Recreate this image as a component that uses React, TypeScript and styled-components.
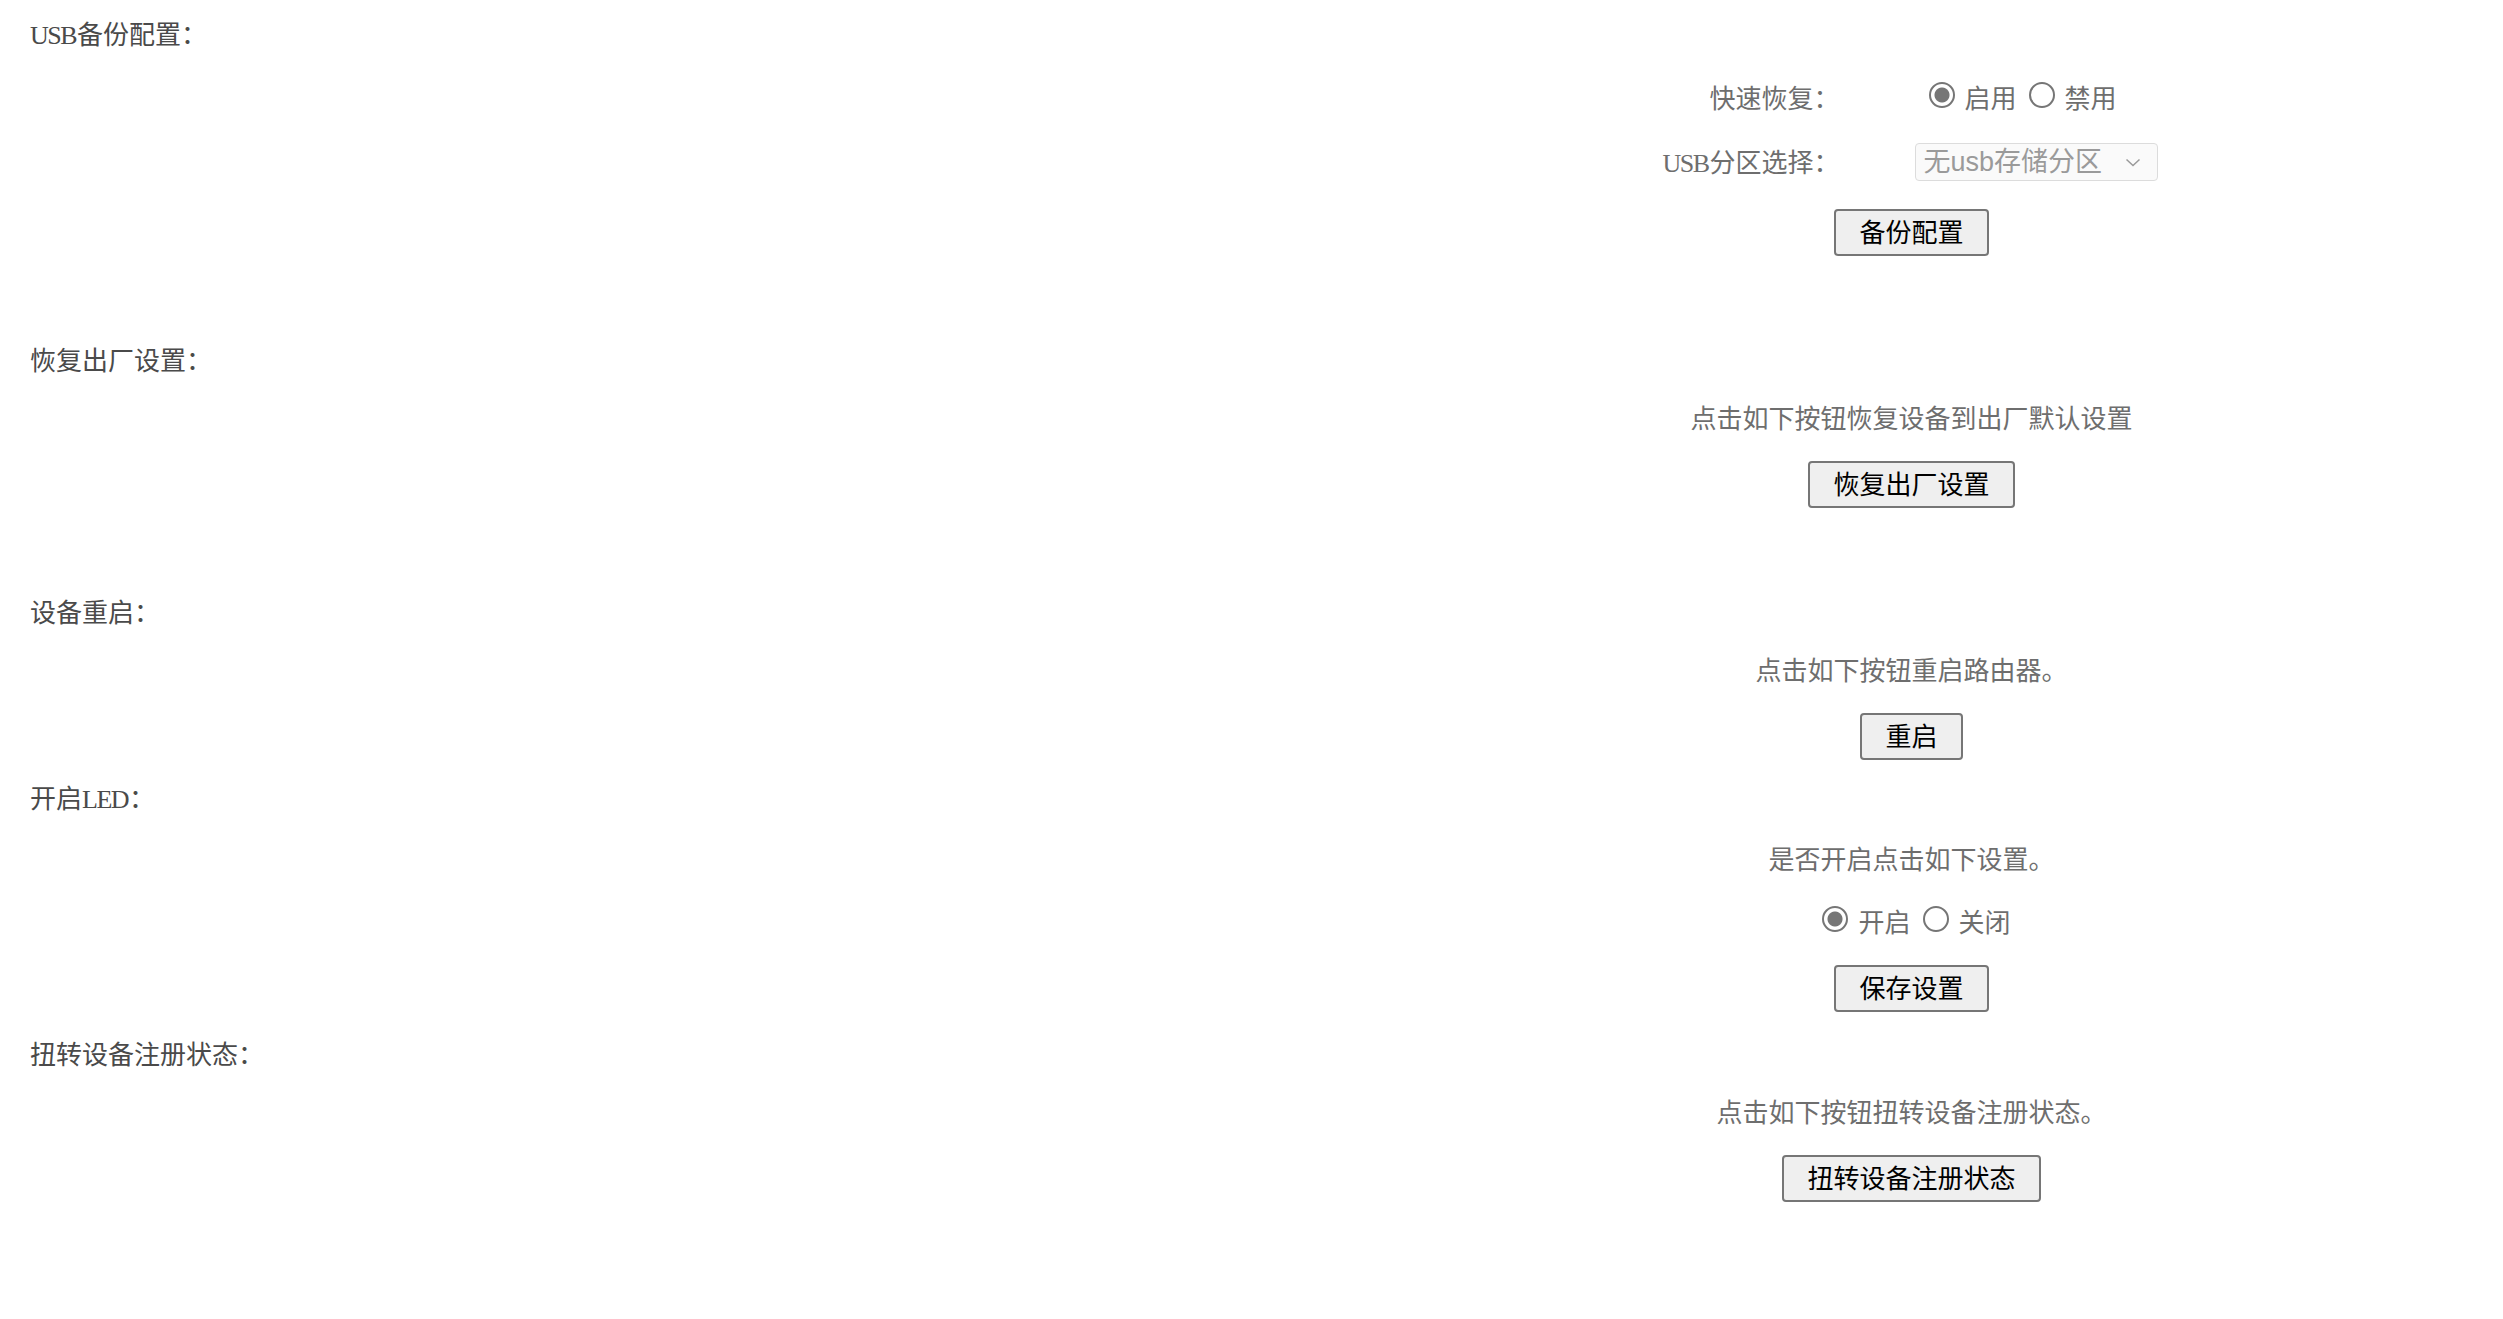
import styled, { createGlobalStyle } from "styled-components"

const GlobalStyle = createGlobalStyle`
    html, body {
        margin: 0;
        padding: 0;
        background: #fff;
    }
    body {
        font-family: "Liberation Serif", "Noto Sans CJK SC", serif;
    }
`

export default function App() {
    return (
        <Page>
            <GlobalStyle />

            <Section $after={86}>
                <Heading><Latin>USB</Latin>备份配置：</Heading>
                <Body>
                    <FormGrid>
                        <Label>快速恢复：</Label>
                        <Value>
                            <RadioGroup $indent={14}>
                                <Radio type="radio" name="fast" defaultChecked />
                                <RadioText>启用</RadioText>
                                <Radio type="radio" name="fast" />
                                <RadioText>禁用</RadioText>
                            </RadioGroup>
                        </Value>
                        <Label><Latin>USB</Latin>分区选择：</Label>
                        <Value>
                            <SelectBox role="combobox" aria-disabled="true">
                                <SelectText>无usb存储分区</SelectText>
                                <svg width="16" height="9" viewBox="0 0 16 9">
                                    <polyline points="1.5,1.5 8,7.5 14.5,1.5" fill="none" stroke="#9a9a9a" strokeWidth="1.5" />
                                </svg>
                            </SelectBox>
                        </Value>
                    </FormGrid>
                    <Button $gap={25}>备份配置</Button>
                </Body>
            </Section>

            <Section $after={86}>
                <Heading>恢复出厂设置：</Heading>
                <Body>
                    <Desc $gap={22}>点击如下按钮恢复设备到出厂默认设置</Desc>
                    <Button $gap={25}>恢复出厂设置</Button>
                </Body>
            </Section>

            <Section $after={20}>
                <Heading>设备重启：</Heading>
                <Body>
                    <Desc $gap={22}>点击如下按钮重启路由器。</Desc>
                    <Button $gap={25}>重启</Button>
                </Body>
            </Section>

            <Section $after={24}>
                <Heading>开启<Latin>LED</Latin>：</Heading>
                <Body>
                    <Desc $gap={25}>是否开启点击如下设置。</Desc>
                    <RadioGroup $indent={10} $gap={27}>
                        <Radio type="radio" name="led" defaultChecked />
                        <RadioText>开启</RadioText>
                        <Radio type="radio" name="led" />
                        <RadioText>关闭</RadioText>
                    </RadioGroup>
                    <Button $gap={25}>保存设置</Button>
                </Body>
            </Section>

            <Section $after={40}>
                <Heading>扭转设备注册状态：</Heading>
                <Body>
                    <Desc $gap={22}>点击如下按钮扭转设备注册状态。</Desc>
                    <Button $gap={25}>扭转设备注册状态</Button>
                </Body>
            </Section>
        </Page>
    )
}

const Page = styled.div`
    width: 2503px;
    min-height: 1319px;
    padding-top: 16px;
    box-sizing: border-box;
`

const Section = styled.section<{ $after: number }>`
    margin-bottom: ${p => p.$after}px;
`

// text lines keep a 36px box, the ink sits a little low as in the original
const Heading = styled.h3`
    margin: 0;
    padding: 4px 0 0 30px;
    height: 36px;
    box-sizing: border-box;
    line-height: 32px;
    font-size: 26px;
    font-weight: normal;
    color: #4a4a4a;
`

const Latin = styled.span`
    font-family: "Liberation Serif", serif;
    letter-spacing: -1.5px;
    margin-right: 1px;
`

const Body = styled.div`
    width: 1183px;
    margin-left: auto;
    display: flex;
    flex-direction: column;
    align-items: center;
`

const FormGrid = styled.div`
    width: 100%;
    margin-top: 24px;
    display: grid;
    grid-template-columns: 1fr 1fr;
    grid-auto-rows: 44px;
    row-gap: 20px;
    align-items: center;
`

const Label = styled.div`
    text-align: right;
    padding: 4px 72px 0 0;
    height: 36px;
    box-sizing: border-box;
    font-size: 26px;
    line-height: 32px;
    color: #6e6e6e;
`

const Value = styled.div`
    padding-left: 3px;
    display: flex;
    align-items: center;
`

const RadioGroup = styled.div<{ $indent: number; $gap?: number }>`
    display: flex;
    align-items: center;
    height: 36px;
    margin-top: ${p => p.$gap ?? 0}px;
    padding-left: ${p => p.$indent}px;
`

const Radio = styled.input`
    appearance: none;
    -webkit-appearance: none;
    flex: none;
    width: 26px;
    height: 26px;
    margin: 0 10px 6px 0;
    box-sizing: border-box;
    border: 2.5px solid #767676;
    border-radius: 50%;
    background: #fff;

    &:checked {
        background: radial-gradient(circle, #767676 0 7px, #fff 8px);
    }
`

const RadioText = styled.span`
    padding-top: 4px;
    height: 36px;
    box-sizing: border-box;
    font-size: 26px;
    line-height: 32px;
    color: #6e6e6e;
    margin-right: 12px;

    &:last-child {
        margin-right: 0;
    }
`

const SelectBox = styled.div`
    width: 243px;
    height: 38px;
    box-sizing: border-box;
    display: flex;
    align-items: center;
    gap: 4px;
    border: 1.5px solid #dcdcdc;
    border-radius: 4px;
    background: #fafafa;
    padding: 0 16px 0 8px;

    svg {
        flex: none;
    }
`

const SelectText = styled.span`
    flex: 1;
    font-family: "Liberation Sans", "Noto Sans CJK SC", sans-serif;
    font-size: 27px;
    line-height: 1;
    color: #9a9a9a;
    white-space: nowrap;
`

const Desc = styled.div<{ $gap: number }>`
    margin-top: ${p => p.$gap}px;
    padding-top: 4px;
    height: 36px;
    box-sizing: border-box;
    font-size: 26px;
    line-height: 32px;
    color: #6e6e6e;
`

const Button = styled.button<{ $gap: number }>`
    margin-top: ${p => p.$gap}px;
    height: 47px;
    box-sizing: border-box;
    padding: 0 23px;
    border: 2px solid #767676;
    border-radius: 4px;
    background: #efefef;
    color: #000;
    font-family: "Liberation Sans", "Noto Sans CJK SC", sans-serif;
    font-size: 26px;
    line-height: 1;
    cursor: pointer;
`
